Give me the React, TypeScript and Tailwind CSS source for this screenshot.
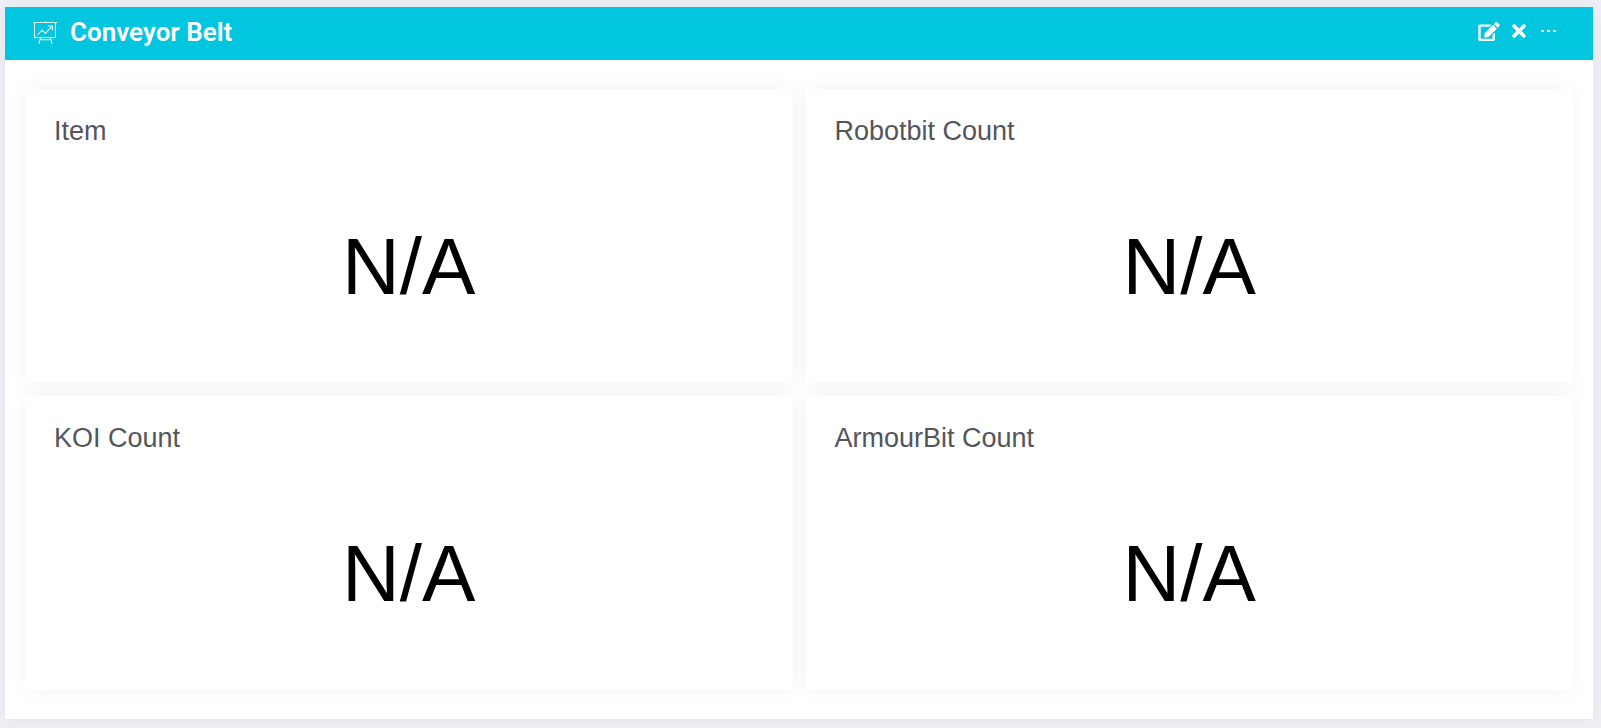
import { FaEdit, FaTimes } from "react-icons/fa";

const metrics = [
  { title: "Item", value: "N/A" },
  { title: "Robotbit Count", value: "N/A" },
  { title: "KOI Count", value: "N/A" },
  { title: "ArmourBit Count", value: "N/A" },
];

function BoardIcon() {
  return (
    <svg viewBox="0 0 24 24" className="h-6 w-6" fill="none" stroke="currentColor" strokeWidth="1.1" strokeOpacity="0.9" aria-hidden="true">
      <path d="M0.500 2.500h23.500M1.500 2.500v15.500M22.500 2.500v15.500M12.500 1v1.500" />
      <path d="M1 17.500h22M7.500 18L5.800 23.800M17.500 18l1.700 5.800M6.500 19.800h12" />
      <path d="M4.500 14.800l4.500-4.500 3.500 3L19.500 6M14.800 6h4.700v4.500" />
    </svg>
  );
}

function DotsIcon() {
  return (
    <svg viewBox="0 0 16 4" className="h-1 w-4" fill="currentColor" aria-hidden="true">
      <rect x="0" y="1" width="3" height="2" rx="0.500" />
      <rect x="6" y="1" width="3" height="2" rx="0.500" />
      <rect x="12" y="1" width="3" height="2" rx="0.500" />
    </svg>
  );
}

function MetricCard({ title, value }: { title: string; value: string }) {
  return (
    <article className="flex min-h-[294px] flex-col bg-white px-[29px] pt-6 font-['Liberation_Sans',Arial,sans-serif] shadow-[0_0_20px_rgba(0,0,0,0.05)]">
      <h2 className="text-[27px] leading-9 text-[#54555a]">{title}</h2>
      <p className="flex flex-1 items-center justify-center pt-0.5 text-[80px] leading-none text-black">{value}</p>
    </article>
  );
}

export default function App() {
  return (
    <main className="min-h-screen bg-[#eff0f6] pt-[7px] pr-2 pb-[9px] pl-[5px]">
      <section className="bg-white shadow-[0_0_20px_rgba(0,0,0,0.06)]">
        <header className="flex h-[53px] items-center justify-between bg-[#02c5df] pr-9 pb-1 pl-7 font-[Roboto,sans-serif] text-white">
          <div className="flex items-center gap-[13px]">
            <BoardIcon />
            <h1 className="text-[26px] leading-8 font-semibold">Conveyor Belt</h1>
          </div>
          <div className="flex items-center gap-3 pb-px">
            <button type="button" aria-label="Edit">
              <FaEdit className="h-[19px] w-[22px]" />
            </button>
            <button type="button" aria-label="Remove">
              <FaTimes className="h-5 w-[14px]" />
            </button>
            <button type="button" aria-label="More" className="ml-[3px]">
              <DotsIcon />
            </button>
          </div>
        </header>
        <div className="grid grid-cols-2 gap-[13px] px-5 py-[29px]">
          {metrics.map((metric) => (
            <MetricCard key={metric.title} title={metric.title} value={metric.value} />
          ))}
        </div>
      </section>
    </main>
  );
}
